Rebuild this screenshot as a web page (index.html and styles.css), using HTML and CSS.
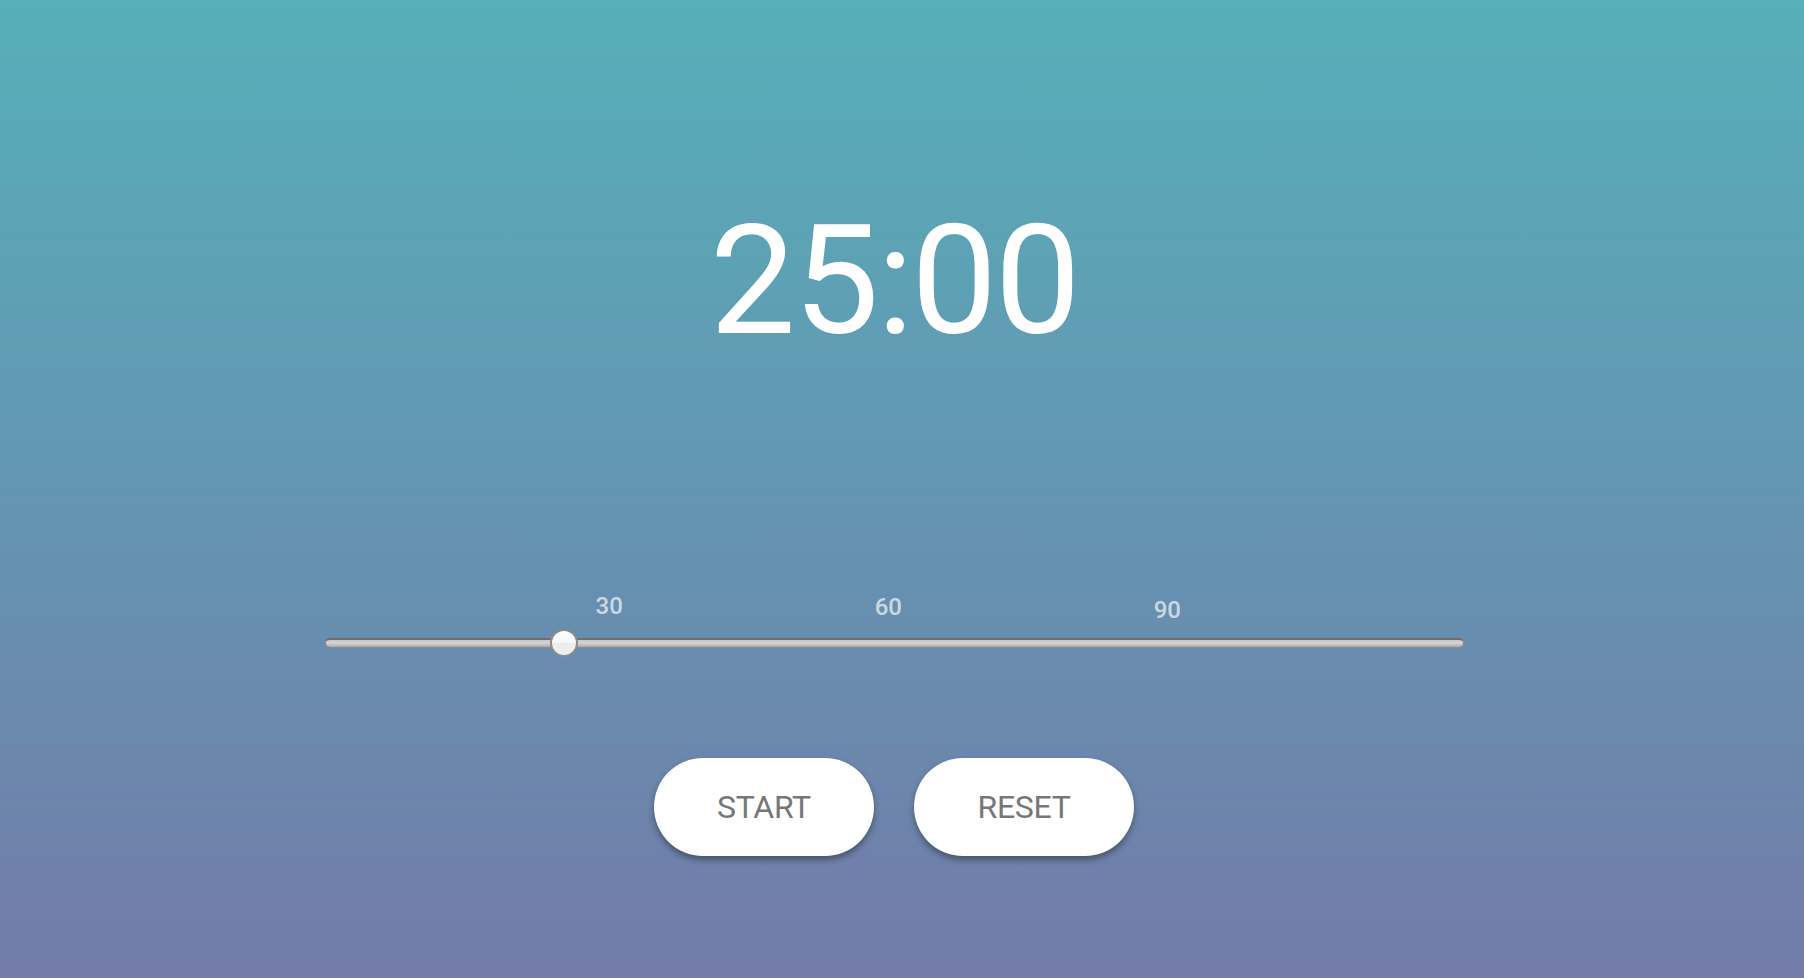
FILE: index.html
```html
<!DOCTYPE html>
<html lang="en">
<head>
<meta charset="utf-8">
<title>Timer</title>
<link rel="stylesheet" href="styles.css">
</head>
<body>
<main class="app">
  <div class="timer">25:00</div>
  <div class="slider">
    <div class="ticks">
      <span class="tick tick-30">30</span>
      <span class="tick tick-60">60</span>
      <span class="tick tick-90">90</span>
    </div>
    <div class="rail" role="slider" aria-valuemin="0" aria-valuemax="120" aria-valuenow="25">
      <div class="track"></div>
      <div class="thumb" style="left: 21%"></div>
    </div>
  </div>
  <div class="buttons">
    <button class="btn">START</button>
    <button class="btn">RESET</button>
  </div>
</main>
</body>
</html>
```
FILE: styles.css
```css
html, body {
  margin: 0;
  height: 100%;
}
body {
  background: linear-gradient(to bottom, #56afb9 0%, #6593b1 55%, #737ba8 100%);
  font-family: Roboto, "Liberation Sans", sans-serif;
  overflow: hidden;
}
.app {
  width: calc(100% - 16px);
  display: flex;
  flex-direction: column;
  align-items: center;
  padding-top: 203px;
}
.timer {
  font-size: 153px;
  line-height: 155px;
  letter-spacing: -2.5px;
  color: #fff;
  font-weight: 400;
}
.slider {
  width: 1139px;
  margin-top: 237px;
}
.ticks {
  position: relative;
  height: 24px;
}
.tick {
  position: absolute;
  top: 0;
  transform: translateX(-50%);
  font-size: 24px;
  line-height: 24px;
  font-weight: 500;
  color: rgba(255, 255, 255, 0.68);
}
.tick-30 { left: 25%; top: -1px; }
.tick-60 { left: 49.5%; top: 0; }
.tick-90 { left: 74%; top: 3px; }
.rail {
  position: relative;
  height: 28px;
  margin-top: 10px;
  display: flex;
  align-items: center;
}
.track {
  width: 100%;
  height: 10px;
  box-sizing: border-box;
  border-radius: 5px;
  border: 1px solid #8a8a8a;
  border-top: 2px solid #6f6f6f;
  background: linear-gradient(to bottom, #c4c4c4 0%, #d4d4d4 35%, #c6c6c6 65%, #a6a6a6 100%);
}
.thumb {
  position: absolute;
  top: 50%;
  width: 28px;
  height: 28px;
  box-sizing: border-box;
  border-radius: 50%;
  border: 2px solid #8a8a8a;
  background: linear-gradient(to bottom, #ffffff 0%, #f7f7f7 50%, #ececec 52%, #f0f0f0 100%);
  transform: translate(-50%, -50%);
}
.buttons {
  margin-top: 101px;
  display: flex;
  gap: 40px;
}
.btn {
  width: 220px;
  height: 98px;
  border: none;
  border-radius: 49px;
  background: #fff;
  color: #777;
  font-family: Roboto, "Liberation Sans", sans-serif;
  font-size: 32px;
  letter-spacing: -0.3px;
  box-shadow: 0 4px 6px rgba(0, 0, 0, 0.35);
  padding: 0;
}
```
